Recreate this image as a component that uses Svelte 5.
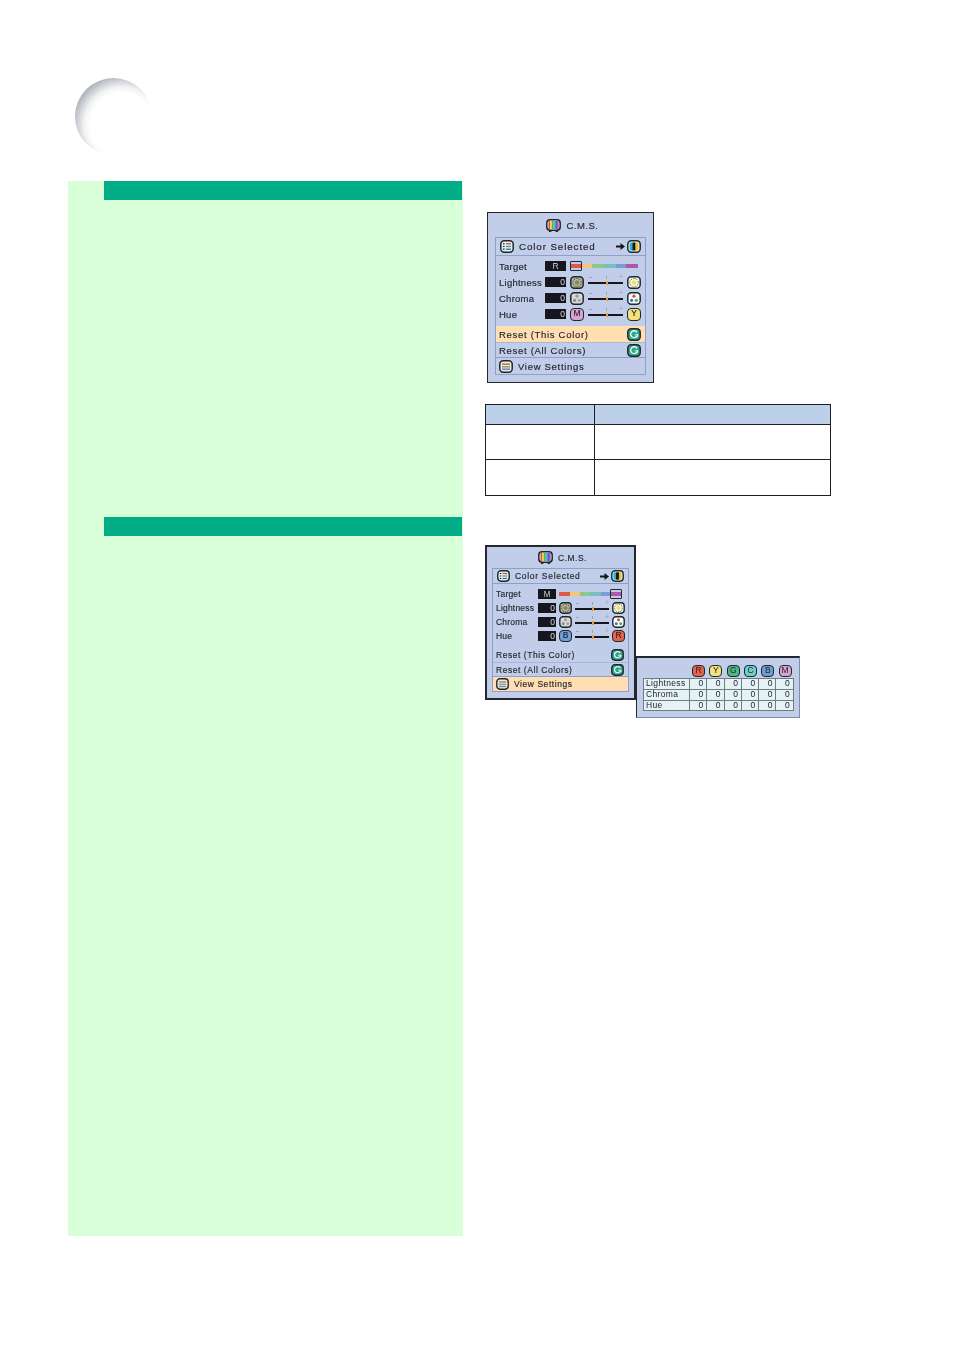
<script>
  const first = {
    cls: 'menu menu--large',
    target: 'R',
    hue: ['M', 'Y'],
    active: 'this'
  };
  const second = {
    cls: 'menu menu--small',
    target: 'M',
    hue: ['B', 'R'],
    active: 'view'
  };
  const badgeColors = {
    R: '#e2654a',
    Y: '#f4e07c',
    G: '#4cb88a',
    C: '#6ccfc8',
    B: '#6c9fd8',
    M: '#d8a4d4'
  };
  const overview = ['Lightness', 'Chroma', 'Hue'];
  const letters = ['R', 'Y', 'G', 'C', 'B', 'M'];
  const stripes = ['#e0503c', '#f2d23c', '#46b85a', '#48b8d8', '#4468d0', '#c050b0'];
</script>

{#snippet frame(fill, inner)}
  <svg class="icon" viewBox="0 0 14 13" aria-hidden="true">
    <rect x="0.8" y="0.8" width="12.4" height="11.4" rx="3.4" fill={fill} stroke="#1e2a28" stroke-width="1.5" />
    {@render inner()}
  </svg>
{/snippet}

{#snippet tv()}
  <svg class="icon icon--tv" viewBox="0 0 15 13" aria-hidden="true">
    <rect x="0.8" y="0.8" width="13.4" height="10.4" rx="3.2" fill="#eef0f4" stroke="#1e2a28" stroke-width="1.5" />
    {#each stripes as color, i}
      <rect x={2.5 + i * 1.7} y="2" width="1.7" height="8" fill={color} />
    {/each}
    <path d="M3 12.4h2.4M9.6 12.4h2.4" stroke="#1e2a28" stroke-width="1.2" />
  </svg>
{/snippet}

{#snippet listIcon()}
  {#snippet marks()}
    <path d="M3 3.8h1.6M3 6.5h1.6M3 9.2h1.6" stroke="#1e2a28" stroke-width="1.2" />
    <path d="M6 3.8h5" stroke="#d8483c" stroke-width="1.3" />
    <path d="M6 6.5h5" stroke="#3ca868" stroke-width="1.3" />
    <path d="M6 9.2h5" stroke="#3c68c8" stroke-width="1.3" />
  {/snippet}
  {@render frame('#e6edf2', marks)}
{/snippet}

{#snippet selectIcon()}
  {#snippet marks()}
    <rect x="2.6" y="2.5" width="2.8" height="8" fill="#20b8c8" />
    <rect x="5.4" y="2.5" width="3.2" height="8" fill="#14161a" />
    <rect x="8.6" y="2.5" width="2.8" height="8" fill="#e8c830" />
  {/snippet}
  {@render frame('#f2f4f8', marks)}
{/snippet}

{#snippet settingsIcon()}
  {#snippet marks()}
    <path d="M3 4.2h8" stroke="#d06a5a" stroke-width="1.5" />
    <path d="M3 6.8h8" stroke="#7aa86a" stroke-width="1.5" />
    <path d="M3 9.2h8" stroke="#7088c0" stroke-width="1.5" />
  {/snippet}
  {@render frame('#eceae4', marks)}
{/snippet}

{#snippet dial(bright)}
  {#snippet marks()}
    <circle cx="7" cy="6.5" r="4.2" fill="none" stroke={bright ? '#6c6c58' : '#4c4c46'} stroke-width="1.1" stroke-dasharray="1 1" />
    <circle cx="7" cy="6.5" r="2.2" fill={bright ? '#f4e048' : '#8c8c40'} />
  {/snippet}
  {@render frame(bright ? '#fbfbf4' : '#b4b4aa', marks)}
{/snippet}

{#snippet chroma(bright)}
  {#snippet marks()}
    <circle cx="7" cy="4.2" r="1.6" fill={bright ? '#e0483c' : '#9a9a9a'} />
    <circle cx="4.6" cy="8.3" r="1.6" fill={bright ? '#3c70d0' : '#8c8c8c'} />
    <circle cx="9.4" cy="8.3" r="1.6" fill={bright ? '#40b060' : '#a4a4a4'} />
  {/snippet}
  {@render frame(bright ? '#fbfbfb' : '#d6d8dc', marks)}
{/snippet}

{#snippet reset()}
  {#snippet marks()}
    <path d="M10 4.4A3.4 3.4 0 1 0 10.2 7.6" fill="none" stroke="#e8f6f2" stroke-width="1.4" />
    <path d="M7.8 6.8h3v1.6" fill="none" stroke="#e8f6f2" stroke-width="1.1" />
  {/snippet}
  {@render frame('#2fa48c', marks)}
{/snippet}

{#snippet badge(letter)}
  <span class="badge" style:background={badgeColors[letter]}>{letter}</span>
{/snippet}

{#snippet slider()}
  <div class="slider">
    <span class="minus"></span>
    <span class="plus">+</span>
    <span class="notch"></span>
    <span class="knob"></span>
  </div>
{/snippet}

{#snippet menu(m)}
  <div class={m.cls}>
    <div class="menu__title">{@render tv()}<span>C.M.S.</span></div>
    <div class="menu__panel">
      <div class="menu__selected">
        {@render listIcon()}
        <span class="menu__grow">Color Selected</span>
        <svg class="arrow" viewBox="0 0 9 7" aria-hidden="true">
          <path d="M0 2.5h4.5V0L9 3.5 4.5 7V4.5H0z" fill="#14161a" />
        </svg>
        {@render selectIcon()}
      </div>
      <div class="menu__rows">
        <div class="row">
          <span>Target</span>
          <b class="value value--center">{m.target}</b>
          <div class="spectrum" class:spectrum--end={m.target === 'M'}><i></i></div>
        </div>
        <div class="row">
          <span>Lightness</span>
          <b class="value">0</b>
          {@render dial(false)}
          {@render slider()}
          {@render dial(true)}
        </div>
        <div class="row">
          <span>Chroma</span>
          <b class="value">0</b>
          {@render chroma(false)}
          {@render slider()}
          {@render chroma(true)}
        </div>
        <div class="row">
          <span>Hue</span>
          <b class="value">0</b>
          {@render badge(m.hue[0])}
          {@render slider()}
          {@render badge(m.hue[1])}
        </div>
      </div>
      <div class="action" class:action--on={m.active === 'this'}>
        <span>Reset (This Color)</span>{@render reset()}
      </div>
      <div class="action action--line">
        <span>Reset (All Colors)</span>{@render reset()}
      </div>
      <div class="action action--view" class:action--on={m.active === 'view'}>
        {@render settingsIcon()}<span>View Settings</span>
      </div>
    </div>
  </div>
{/snippet}

<div class="page">
  <header class="head"><div class="bubble"></div></header>
  <div class="columns">
    <section class="panel">
      <div class="panel__part panel__part--first"><div class="bar"></div></div>
      <div class="panel__part"><div class="bar"></div></div>
    </section>
    <aside class="side">
      <div class="side__menu">{@render menu(first)}</div>
      <table class="blank">
        <thead><tr><th></th><th></th></tr></thead>
        <tbody>
          <tr class="blank__short"><td></td><td></td></tr>
          <tr><td></td><td></td></tr>
        </tbody>
      </table>
      <div class="pair">
        {@render menu(second)}
        <div class="values">
          <div class="values__grid">
            <span></span>
            {#each letters as letter}
              <span class="values__head">{@render badge(letter)}</span>
            {/each}
            {#each overview as name}
              <span class="cell cell--name">{name}</span>
              {#each letters as _}
                <span class="cell cell--num">0</span>
              {/each}
            {/each}
          </div>
        </div>
      </div>
    </aside>
  </div>
</div>

<style>
  :global(body) {
    background: #fff;
  }

  .page {
    width: 954px;
    height: 1350px;
    font-family: 'Liberation Sans', Arial, sans-serif;
  }

  .head {
    height: 181px;
    box-sizing: border-box;
    padding: 78px 0 0 75px;
  }

  .bubble {
    width: 77px;
    height: 77px;
    border-radius: 50%;
    background: radial-gradient(circle 50px at 61% 61%, #fff 0, #fff 32px, #f1f2f4 38px, #cfd2d7 44px, #aeb2ba 50px);
  }

  .columns {
    display: flex;
    gap: 22px;
    margin-left: 68px;
  }

  .panel {
    width: 395px;
    height: 1055px;
    background: #d9ffd9;
  }

  .panel__part--first {
    height: 336px;
  }

  .bar {
    height: 19px;
    margin: 0 1px 0 36px;
    background: #00ad85;
  }

  .side {
    padding-top: 31px;
  }

  .side__menu {
    margin-left: 2px;
  }

  .menu {
    box-sizing: border-box;
    flex: none;
    background: #c2cde9;
    border: 1px solid #23272f;
    color: #22262e;
    filter: blur(0.25px);
    letter-spacing: 0.9px;
    -webkit-text-stroke: 0.15px #22262e;
  }

  .menu--large {
    width: 167px;
    height: 171px;
    padding: 0 7px;
    font-size: 9.5px;
    --label: 42px;
    --value: 21px;
    --icon-w: 14px;
    --icon-h: 13px;
    --gap: 4px;
    --row: 16px;
  }

  .menu--small {
    width: 151px;
    height: 155px;
    padding: 0 5px;
    border-width: 2px;
    font-size: 8.5px;
    letter-spacing: 0.7px;
    --label: 39px;
    --value: 18px;
    --icon-w: 13px;
    --icon-h: 12px;
    --gap: 3px;
    --row: 14px;
  }

  .menu__title {
    display: flex;
    justify-content: center;
    align-items: center;
    gap: 5px;
    height: 24px;
    padding-left: 4px;
    letter-spacing: 0.5px;
  }

  .menu--small .menu__title {
    height: 21px;
  }

  .menu__panel {
    border: 1px solid #8ca1c6;
  }

  .icon {
    display: block;
    flex: none;
    width: var(--icon-w);
    height: var(--icon-h);
  }

  .icon--tv {
    width: 15px;
    height: 13px;
  }

  .menu__selected {
    display: flex;
    align-items: center;
    gap: 5px;
    height: 17px;
    padding: 0 4px;
    border-bottom: 1px solid #8ca1c6;
    font-size: 1.03em;
  }

  .menu--small .menu__selected {
    height: 14px;
    font-size: 1em;
  }

  .menu__grow {
    flex: 1;
  }

  .arrow {
    flex: none;
    width: 9px;
    height: 7px;
    margin-right: -3px;
  }

  .menu__rows {
    display: flex;
    flex-direction: column;
    padding: 2px 4px 4px 3px;
    letter-spacing: 0.25px;
  }

  .menu--small .menu__rows {
    padding: 3px 3px 5px 3px;
    letter-spacing: 0.2px;
  }

  .row {
    display: grid;
    grid-template-columns: var(--label) var(--value) var(--icon-w) 1fr var(--icon-w);
    column-gap: var(--gap);
    align-items: center;
    height: var(--row);
    white-space: nowrap;
  }

  .value {
    height: 10px;
    padding: 0 1px;
    background: #15171c;
    color: #f0f2f6;
    font-size: 8.5px;
    font-weight: 400;
    line-height: 10px;
    letter-spacing: 0;
    text-align: right;
  }

  .value--center {
    text-align: center;
  }

  .badge {
    box-sizing: border-box;
    display: block;
    width: var(--icon-w, 14px);
    height: var(--icon-h, 12px);
    border: 1.5px solid #1e2a28;
    border-radius: 4px;
    color: #2e2028;
    font-size: 8.5px;
    line-height: 9px;
    letter-spacing: 0;
    text-align: center;
  }

  .slider {
    position: relative;
    height: 2px;
    margin-top: 2px;
    background: #15171c;
  }

  .knob,
  .notch,
  .minus,
  .plus {
    position: absolute;
  }

  .knob {
    left: 50%;
    top: -1px;
    width: 2px;
    height: 4px;
    background: #e8a030;
  }

  .notch {
    left: 50%;
    top: -6px;
    width: 1px;
    height: 3px;
    background: #98a4bc;
  }

  .minus {
    left: 1px;
    top: -5px;
    width: 3px;
    height: 1px;
    background: #98a4bc;
  }

  .plus {
    right: 0;
    top: -9px;
    color: #98a4bc;
    font-size: 7px;
    line-height: 8px;
    letter-spacing: 0;
    -webkit-text-stroke: 0;
  }

  .spectrum {
    position: relative;
    grid-column: 3 / 6;
    height: 4px;
    margin-right: 3px;
    background: linear-gradient(90deg, #e0584c 0 17%, #f2c878 17% 33%, #8cc88c 33% 50%, #78c0c0 50% 67%, #7c9cd8 67% 83%, #b058a8 83%);
  }

  .spectrum i {
    position: absolute;
    left: 0;
    top: -3px;
    width: 10px;
    height: 8px;
    border: 1px solid #23272f;
    border-radius: 1px;
  }

  .spectrum--end i {
    left: auto;
    right: 0;
  }

  .action {
    display: flex;
    justify-content: space-between;
    align-items: center;
    height: 16px;
    padding: 0 4px 0 3px;
    letter-spacing: 0.7px;
    white-space: nowrap;
  }

  .menu--small .action {
    height: 14px;
    padding-left: 3px;
    letter-spacing: 0.55px;
  }

  .action--line {
    border-top: 1px solid #a9b8d8;
    border-bottom: 1px solid #8ca1c6;
    height: 14px;
  }

  .menu--small .action--line {
    height: 13px;
  }

  .action--view {
    justify-content: flex-start;
    gap: 5px;
  }

  .action--on {
    background: #ffdfb2;
  }

  .blank {
    width: 346px;
    height: 92px;
    margin-top: 21px;
    border-collapse: collapse;
    table-layout: fixed;
  }

  .blank th,
  .blank td {
    padding: 0;
    border: 1px solid #1c1e22;
  }

  .blank th {
    height: 19px;
    background: #bdd0ea;
  }

  .blank th:first-child {
    width: 108px;
  }

  .blank__short td {
    height: 34px;
  }

  .pair {
    display: flex;
    align-items: flex-start;
    margin-top: 49px;
  }

  .values {
    box-sizing: border-box;
    width: 164px;
    height: 62px;
    margin-top: 111px;
    padding: 7px 0 0 6px;
    background: #c2cde9;
    border-top: 2px solid #23272f;
    border-left: 1px solid #23272f;
    border-right: 1px solid #7c8cae;
    border-bottom: 1px solid #7c8cae;
    filter: blur(0.25px);
    --icon-w: 13px;
    --icon-h: 12px;
  }

  .values__grid {
    display: grid;
    grid-template-columns: 47px repeat(6, 17.3px);
    grid-template-rows: 13px repeat(3, 11px);
    width: 151px;
    color: #22262e;
    font-size: 8.5px;
    letter-spacing: 0.35px;
  }

  .values__head {
    display: flex;
    justify-content: center;
  }

  .cell {
    box-sizing: border-box;
    border: solid #6c7e7e;
    border-width: 1px 1px 0 0;
    background: #e6f2f5;
    line-height: 9px;
  }

  .cell--name {
    padding-left: 2px;
    border-left-width: 1px;
  }

  .cell--num {
    padding-right: 3px;
    letter-spacing: 0;
    text-align: right;
  }

  .values__grid .cell:nth-last-child(-n + 7) {
    height: 11px;
    border-bottom-width: 1px;
  }
</style>
